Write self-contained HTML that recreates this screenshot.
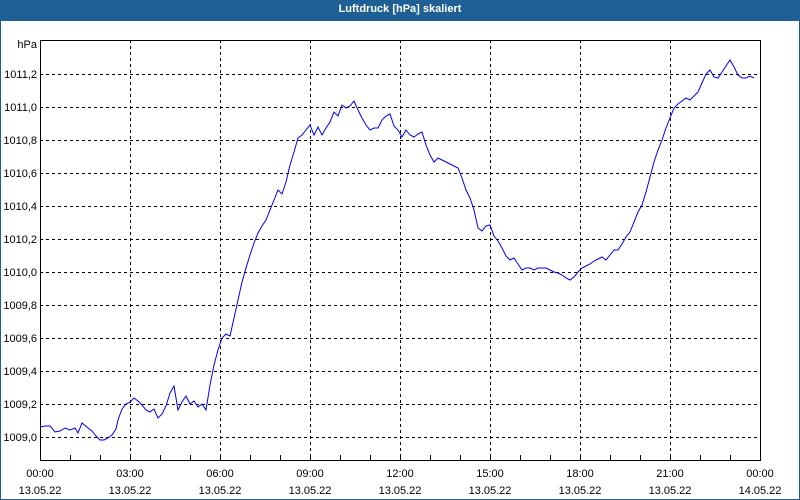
<!DOCTYPE html>
<html><head><style>
html,body{margin:0;padding:0;width:800px;height:500px;overflow:hidden;background:#fff}
#w{position:absolute;left:0;top:0;width:798px;height:499px;border:1px solid #1e6096;border-top:none;}
#t{position:absolute;left:0;top:0;width:800px;height:21px;background:#1e6096;color:#fff;font:bold 11px "Liberation Sans",sans-serif;text-align:center;line-height:19px}
svg{position:absolute;left:0;top:0}
text{font-family:"Liberation Sans",sans-serif;font-size:11px;fill:#000}
</style></head><body>
<div id="w"></div>
<div id="t">Luftdruck [hPa] skaliert</div>
<svg width="800" height="500">
<g stroke="#000" stroke-width="1" stroke-dasharray="3,3" shape-rendering="crispEdges">
<line x1="40" x2="760" y1="74.5" y2="74.5"/><line x1="40" x2="760" y1="107.5" y2="107.5"/>
<line x1="40" x2="760" y1="140.5" y2="140.5"/><line x1="40" x2="760" y1="173.5" y2="173.5"/>
<line x1="40" x2="760" y1="206.5" y2="206.5"/><line x1="40" x2="760" y1="239.5" y2="239.5"/>
<line x1="40" x2="760" y1="272.5" y2="272.5"/><line x1="40" x2="760" y1="305.5" y2="305.5"/>
<line x1="40" x2="760" y1="338.5" y2="338.5"/><line x1="40" x2="760" y1="371.5" y2="371.5"/>
<line x1="40" x2="760" y1="404.5" y2="404.5"/><line x1="40" x2="760" y1="437.5" y2="437.5"/>
<line x1="130.5" x2="130.5" y1="40" y2="460"/><line x1="220.5" x2="220.5" y1="40" y2="460"/>
<line x1="310.5" x2="310.5" y1="40" y2="460"/><line x1="400.5" x2="400.5" y1="40" y2="460"/>
<line x1="490.5" x2="490.5" y1="40" y2="460"/><line x1="580.5" x2="580.5" y1="40" y2="460"/>
<line x1="670.5" x2="670.5" y1="40" y2="460"/>
</g>
<g stroke="#000" stroke-width="1" fill="none" shape-rendering="crispEdges">
<polyline points="40.5,460.5 40.5,40.5 760.5,40.5 760.5,460.5"/>
<line x1="40" x2="761" y1="460.5" y2="460.5"/>
<path d="M70.5 460v-5M100.5 460v-5M130.5 460v-5M160.5 460v-5M190.5 460v-5M220.5 460v-5M250.5 460v-5M280.5 460v-5M310.5 460v-5M340.5 460v-5M370.5 460v-5M400.5 460v-5M430.5 460v-5M460.5 460v-5M490.5 460v-5M520.5 460v-5M550.5 460v-5M580.5 460v-5M610.5 460v-5M640.5 460v-5M670.5 460v-5M700.5 460v-5M730.5 460v-5"/>
</g>
<polyline fill="none" stroke="#0000ee" stroke-width="1" points="40,427 45,426 50,426 55,432 60,431 65,428 70,430 75,428 78,433 82,423 88,428 92,431 96,436 100,440 104,440 108,438 112,435 116,429 118,420 122,409 126,404 130,402 134,398 138,401 142,405 146,410 150,412 154,409 158,418 162,414 166,406 170,393 174,386 178,410 182,402 186,396 190,404 194,401 198,407 202,404 206,410 210,385 214,365 218,350 222,338 226,334 230,336 234,318 238,300 242,282 246,268 250,255 254,243 258,233 262,226 266,220 270,210 274,200 278,190 282,194 286,182 290,165 294,152 298,138 302,135 306,130 310,125 314,135 318,127 322,135 326,128 330,122 334,112 338,116 342,105 346,108 350,106 354,101 358,110 362,118 366,125 370,130 374,128 378,128 382,120 386,116 390,114 394,126 398,130 402,137 406,130 410,135 414,137 418,134 422,132 426,145 430,155 434,162 438,158 442,160 446,162 450,164 454,166 458,168 462,178 466,190 470,198 474,210 478,228 482,231 486,226 490,225 494,236 498,241 502,248 506,256 510,260 514,258 518,264 522,270 526,268 530,268 534,270 538,268 542,268 546,268 550,270 554,272 558,273 562,275 566,278 570,280 574,277 578,272 582,268 586,266 590,264 594,261 598,259 602,257 606,260 610,255 614,250 618,250 622,244 626,237 630,232 634,222 638,212 642,205 646,192 650,177 654,162 658,150 662,140 666,128 670,118 674,108 678,104 682,101 686,98 690,100 694,96 698,92 702,83 706,74 710,70 714,77 718,78 722,72 726,66 730,60 734,67 738,75 742,78 746,78 750,76 754,78"/>
<g text-anchor="end">
<text x="37" y="48">hPa</text>
<text x="37" y="78">1011,2</text><text x="37" y="111">1011,0</text><text x="37" y="144">1010,8</text>
<text x="37" y="177">1010,6</text><text x="37" y="210">1010,4</text><text x="37" y="243">1010,2</text>
<text x="37" y="276">1010,0</text><text x="37" y="309">1009,8</text><text x="37" y="342">1009,6</text>
<text x="37" y="375">1009,4</text><text x="37" y="408">1009,2</text><text x="37" y="441">1009,0</text>
</g>
<g text-anchor="middle">
<text x="40" y="477">00:00</text><text x="40" y="494">13.05.22</text>
<text x="130" y="477">03:00</text><text x="130" y="494">13.05.22</text>
<text x="220" y="477">06:00</text><text x="220" y="494">13.05.22</text>
<text x="310" y="477">09:00</text><text x="310" y="494">13.05.22</text>
<text x="400" y="477">12:00</text><text x="400" y="494">13.05.22</text>
<text x="490" y="477">15:00</text><text x="490" y="494">13.05.22</text>
<text x="580" y="477">18:00</text><text x="580" y="494">13.05.22</text>
<text x="670" y="477">21:00</text><text x="670" y="494">13.05.22</text>
<text x="760" y="477">00:00</text><text x="760" y="494">14.05.22</text>
</g>
</svg>
</body></html>
